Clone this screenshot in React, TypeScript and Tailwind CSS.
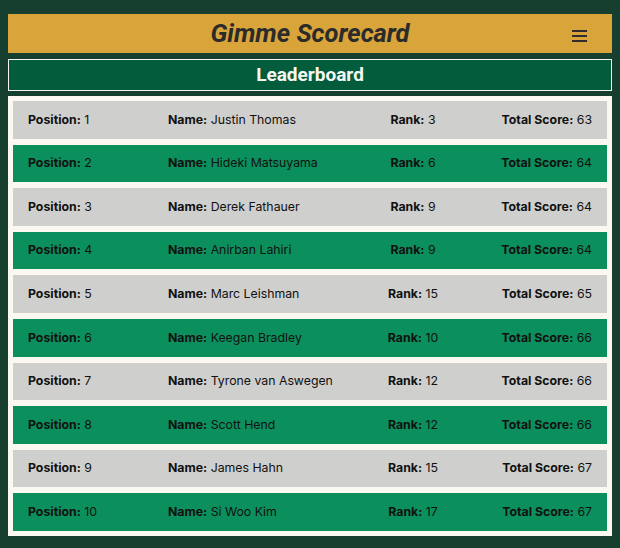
const players = [
  { position: 1, name: 'Justin Thomas', rank: 3, total: 63 },
  { position: 2, name: 'Hideki Matsuyama', rank: 6, total: 64 },
  { position: 3, name: 'Derek Fathauer', rank: 9, total: 64 },
  { position: 4, name: 'Anirban Lahiri', rank: 9, total: 64 },
  { position: 5, name: 'Marc Leishman', rank: 15, total: 65 },
  { position: 6, name: 'Keegan Bradley', rank: 10, total: 66 },
  { position: 7, name: 'Tyrone van Aswegen', rank: 12, total: 66 },
  { position: 8, name: 'Scott Hend', rank: 12, total: 66 },
  { position: 9, name: 'James Hahn', rank: 15, total: 67 },
  { position: 10, name: 'Si Woo Kim', rank: 17, total: 67 },
]

export default function App() {
  return (
    <main className="min-h-[548px] bg-[#163f2f] px-[8px] pt-[14px] pb-[12px]">
      <header className="relative flex h-[39px] items-center justify-center bg-[#d9a43a]">
        <h1 className="font-['Roboto',sans-serif] text-[25.5px] font-bold italic text-[#2b2b2b]">Gimme Scorecard</h1>
        <button className="absolute right-[25px] top-[16px] flex flex-col gap-[3px]" title="Menu">
          <span className="block h-[2px] w-[15px] bg-[#2e2e2e]" />
          <span className="block h-[2px] w-[15px] bg-[#2e2e2e]" />
          <span className="block h-[2px] w-[15px] bg-[#2e2e2e]" />
        </button>
      </header>

      <div className="mt-[6px] flex h-[32px] items-center justify-center border border-[#f5f5ef] bg-[#035c3c]">
        <h2 className="font-['Roboto',sans-serif] text-[19px] font-bold text-[#f7f7f2]">Leaderboard</h2>
      </div>

      <ul className="mt-[5px] flex flex-col gap-[6px] bg-[#faf8f0] p-[5px] font-['Inter',sans-serif] text-[12.3px] text-[#111]">
        {players.map((p, i) => (
          <li
            key={p.position}
            className={`flex h-[37.6px] items-center px-[15px] ${i % 2 === 0 ? 'bg-[#cfcfcd]' : 'bg-[#0b8f5c]'}`}
          >
            <div className="w-[140px]">
              <b className="font-bold">Position:</b> {p.position}
            </div>
            <div className="flex-1">
              <b className="font-bold">Name:</b> {p.name}
            </div>
            <div className="w-[80px] text-center">
              <b className="font-bold">Rank:</b> {p.rank}
            </div>
            <div className="w-[139px] text-right">
              <b className="font-bold">Total Score:</b> {p.total}
            </div>
          </li>
        ))}
      </ul>
    </main>
  )
}
